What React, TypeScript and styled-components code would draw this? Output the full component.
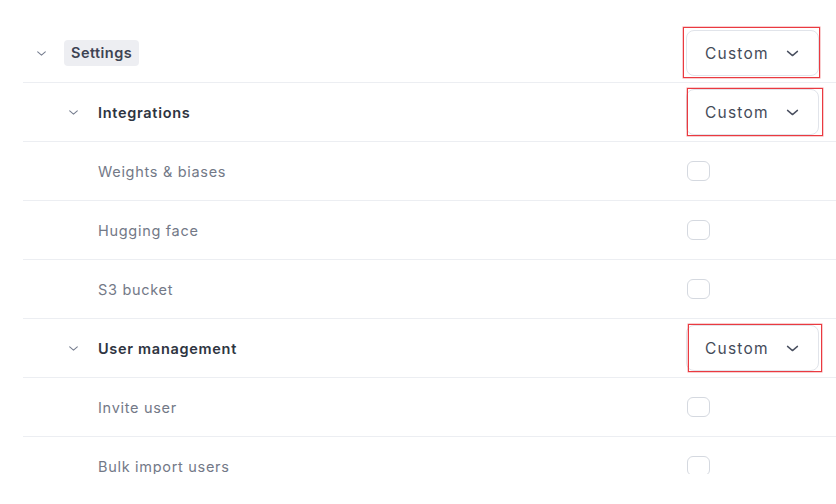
import React from "react";
import styled, { createGlobalStyle } from "styled-components";

type Access = "custom" | "toggle";

type Item = {
  label: string;
  level: 0 | 1 | 2;
  access: Access;
  tag?: boolean;
  mark?: { top: number; left: number; right: number; bottom: number };
};

const items: Item[] = [
  {
    label: "Settings",
    level: 0,
    access: "custom",
    tag: true,
    mark: { top: -3, left: -3, right: -1, bottom: -2 },
  },
  {
    label: "Integrations",
    level: 1,
    access: "custom",
    mark: { top: -1, left: 1, right: -4, bottom: -1 },
  },
  { label: "Weights & biases", level: 2, access: "toggle" },
  { label: "Hugging face", level: 2, access: "toggle" },
  { label: "S3 bucket", level: 2, access: "toggle" },
  {
    label: "User management",
    level: 1,
    access: "custom",
    mark: { top: -1, left: 2, right: -3, bottom: -1 },
  },
  { label: "Invite user", level: 2, access: "toggle" },
  { label: "Bulk import users", level: 2, access: "toggle" },
];

const Chevron = ({ size = 12, color = "#6b7180" }: { size?: number; color?: string }) => (
  <svg width={size} height={size} viewBox="0 0 24 24" fill="none">
    <path
      d="M5 9l7 6 7-6"
      stroke={color}
      strokeWidth={2}
      strokeLinecap="round"
      strokeLinejoin="round"
    />
  </svg>
);

function App() {
  return (
    <>
      <GlobalStyle />
      <Tree>
        {items.map((item) => (
          <Row key={item.label}>
            <NameCell level={item.level}>
              {item.level < 2 && (
                <Toggle>
                  <Chevron size={13} color="#757c8e" />
                </Toggle>
              )}
              {item.tag ? (
                <Tag>{item.label}</Tag>
              ) : (
                <Name $leaf={item.level === 2}>{item.label}</Name>
              )}
            </NameCell>
            <AccessCell>
              {item.access === "custom" ? (
                <Marked
                  $top={item.mark?.top ?? 0}
                  $left={item.mark?.left ?? 0}
                  $right={item.mark?.right ?? 0}
                  $bottom={item.mark?.bottom ?? 0}
                >
                  <Select>
                    <span>Custom</span>
                    <Chevron size={17} color="#4a5060" />
                  </Select>
                </Marked>
              ) : (
                <Checkbox />
              )}
            </AccessCell>
          </Row>
        ))}
      </Tree>
    </>
  );
}

const GlobalStyle = createGlobalStyle`
  html, body {
    margin: 0;
    background: #ffffff;
    font-family: Inter, "Noto Sans", sans-serif;
  }
`;

const Tree = styled.div`
  box-sizing: border-box;
  padding: 24px 0 0 23px;
  height: 474px;
  overflow: hidden;
`;

const Row = styled.div`
  display: flex;
  align-items: center;
  justify-content: space-between;
  height: 58px;
  border-bottom: 1px solid #eceef2;
`;

const NameCell = styled.div<{ level: number }>`
  display: flex;
  align-items: center;
  padding-left: ${(p) => [12, 44, 75][p.level]}px;
`;

const Toggle = styled.span`
  display: flex;
  width: 17px;
  margin-right: 12px;
`;

const Tag = styled.span`
  background: #edeef2;
  border-radius: 4px;
  padding: 4px 7px 5px;
  font-size: 14.5px;
  font-weight: 600;
  letter-spacing: 0.45px;
  color: #3d4352;
`;

const Name = styled.span<{ $leaf: boolean }>`
  margin-left: ${(p) => (p.$leaf ? 0 : 2)}px;
  font-size: 14.5px;
  letter-spacing: 0.7px;
  font-weight: ${(p) => (p.$leaf ? 400 : 600)};
  color: ${(p) => (p.$leaf ? "#737987" : "#2e3441")};
`;

const AccessCell = styled.div`
  width: 150px;
  display: flex;
  align-items: center;
`;

const Marked = styled.div<{ $top: number; $left: number; $right: number; $bottom: number }>`
  position: relative;

  &::after {
    content: "";
    position: absolute;
    top: ${(p) => p.$top}px;
    left: ${(p) => p.$left}px;
    right: ${(p) => p.$right}px;
    bottom: ${(p) => p.$bottom}px;
    border: 1px solid #ea3a40;
    box-shadow: 0 0 0 0.5px rgba(234, 58, 64, 0.5);
    pointer-events: none;
  }
`;

const Select = styled.div`
  box-sizing: border-box;
  width: 133px;
  height: 46px;
  display: flex;
  align-items: center;
  justify-content: space-between;
  padding: 0 17px 0 18px;
  border: 1px solid #e1e4ea;
  border-radius: 8px;
  font-size: 15.5px;
  letter-spacing: 1.2px;
  color: #454b59;
`;

const Checkbox = styled.span`
  box-sizing: border-box;
  width: 23px;
  height: 20px;
  margin-left: 1px;
  border: 1.5px solid #d5d9e0;
  border-radius: 6px;
`;

export default App;
